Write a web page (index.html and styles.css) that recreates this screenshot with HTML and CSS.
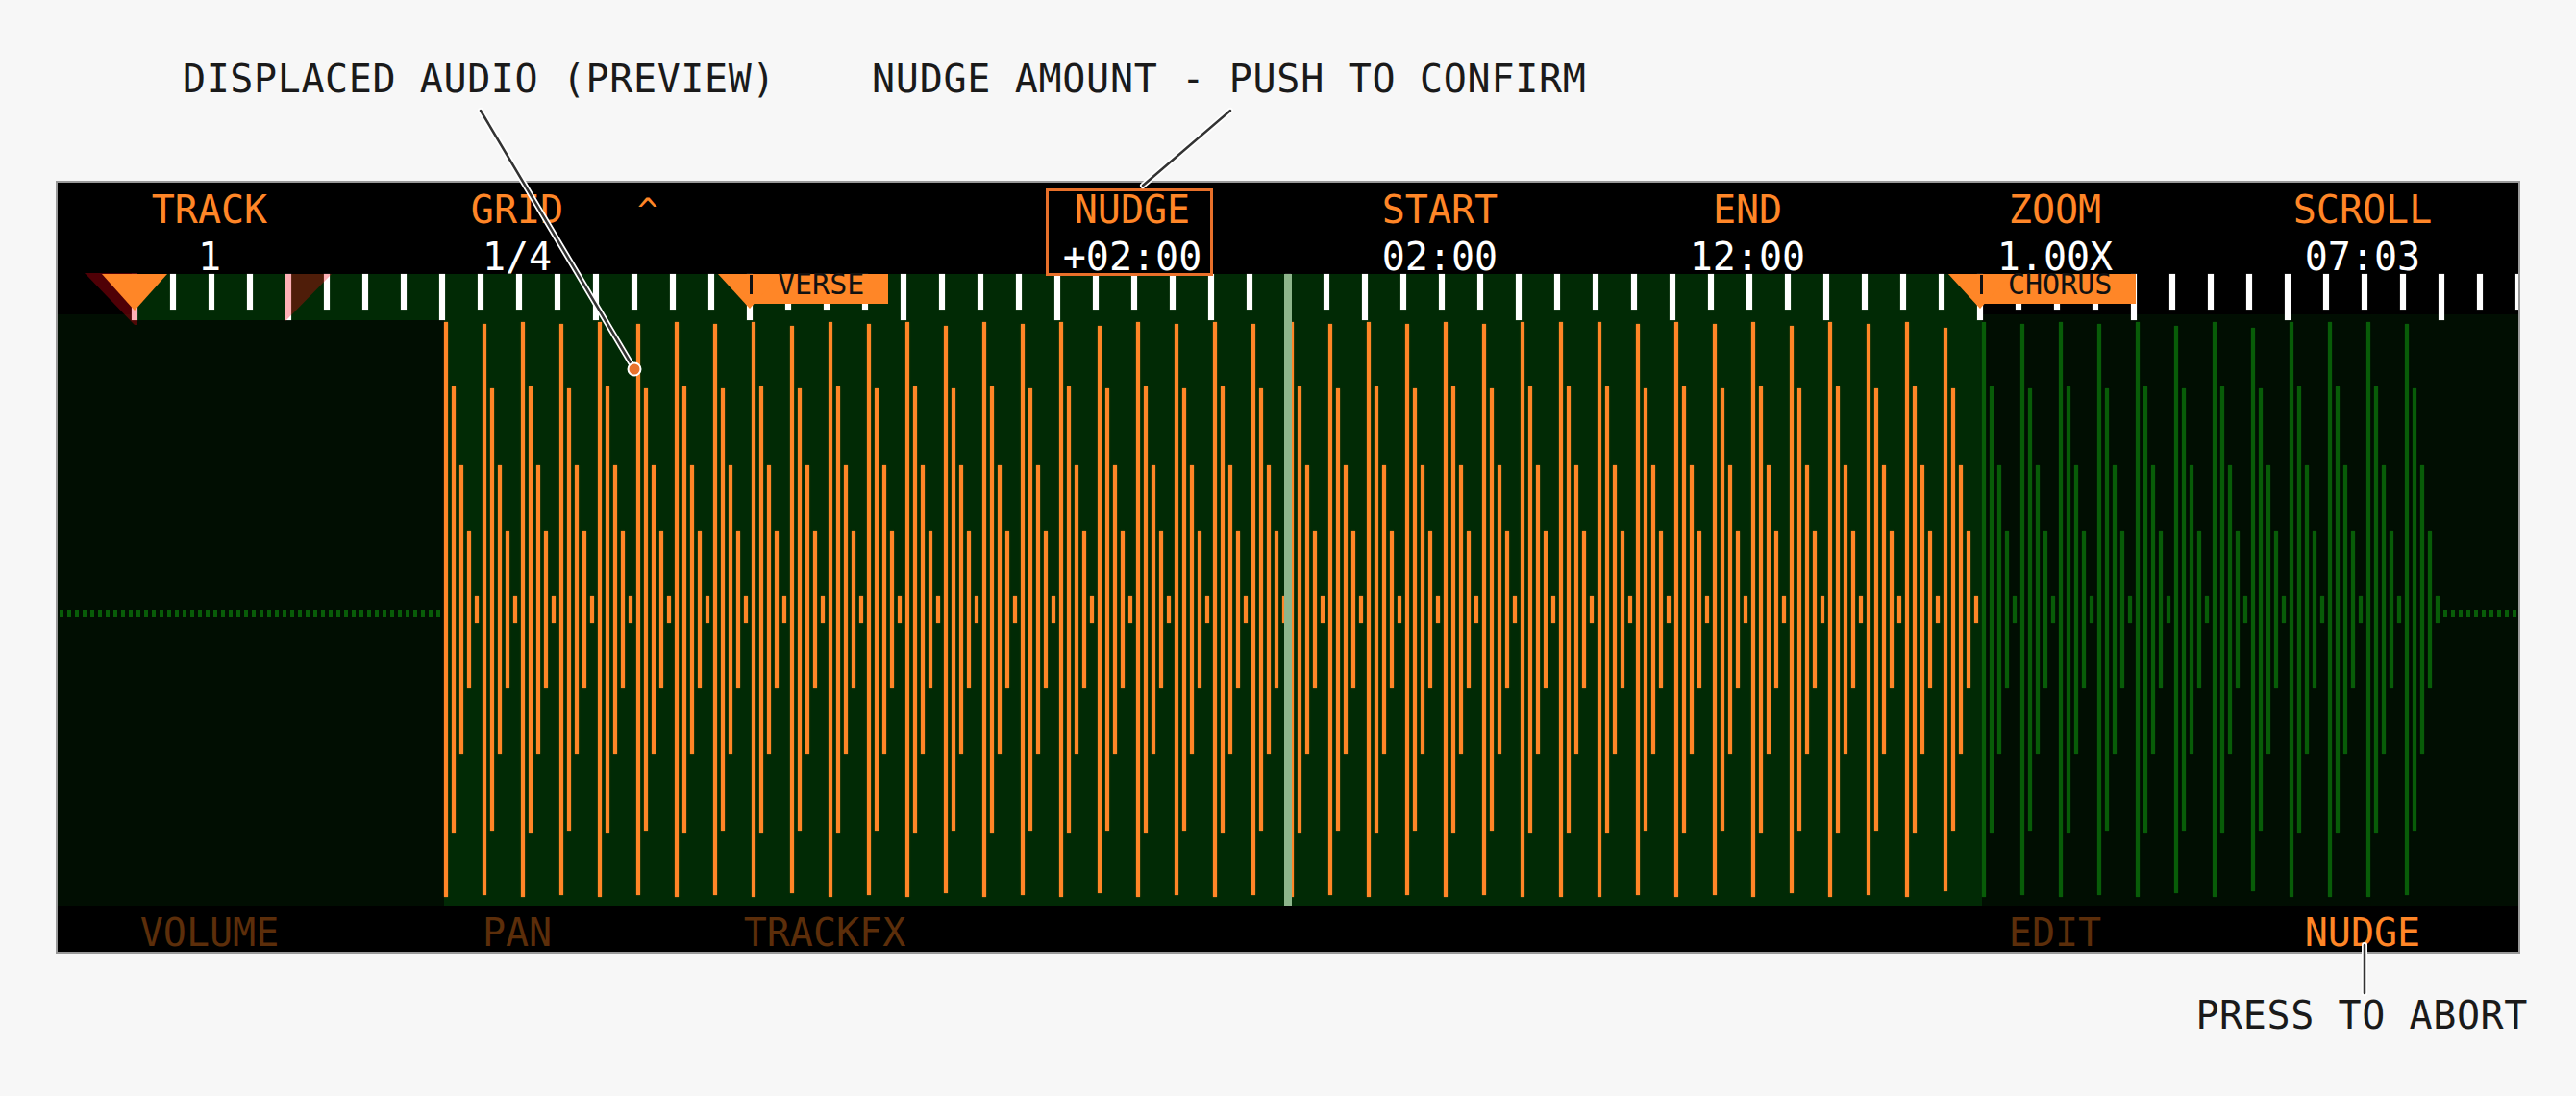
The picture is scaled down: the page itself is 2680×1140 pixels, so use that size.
FILE: index.html
```html
<!DOCTYPE html>
<html>
<head>
  <link rel="stylesheet" href="styles.css">
</head>
<body>
  <div id="page">
    <div class="notes-top">
      <span class="note note-audio">DISPLACED AUDIO (PREVIEW)</span>
      <span class="note note-nudge">NUDGE AMOUNT - PUSH TO CONFIRM</span>
    </div>

    <div id="screen">
      <div class="params">
        <div class="param"><div class="label">TRACK</div><div class="value">1</div></div>
        <div class="param">
          <div class="label">GRID</div><div class="value">1/4</div>
          <span class="caret">^</span>
        </div>
        <div class="param"></div>
        <div class="param active"><div class="label">NUDGE</div><div class="value">+02:00</div></div>
        <div class="param"><div class="label">START</div><div class="value">02:00</div></div>
        <div class="param"><div class="label">END</div><div class="value">12:00</div></div>
        <div class="param"><div class="label">ZOOM</div><div class="value">1.00X</div></div>
        <div class="param"><div class="label">SCROLL</div><div class="value">07:03</div></div>
      </div>

      <div id="ruler"></div>
      <div id="wave"></div>

      <div class="softkeys">
        <div class="softkey">VOLUME</div>
        <div class="softkey">PAN</div>
        <div class="softkey">TRACKFX</div>
        <div class="softkey"></div>
        <div class="softkey"></div>
        <div class="softkey"></div>
        <div class="softkey">EDIT</div>
        <div class="softkey lit">NUDGE</div>
      </div>

      <!-- loop markers, coords are relative to the screen -->
      <svg class="markers" width="2560" height="800">
        <polygon points="28,94 83,94 83,148 80,148" fill="#ff0014" fill-opacity="0.31"/>
        <polygon points="46,95 114,95 80,133" fill="#ff8627"/>
        <polygon points="237,95 285,95 237,144" fill="#ff0014" fill-opacity="0.31"/>
      </svg>

      <div class="playhead"></div>

      <div class="flag flag-verse"><span class="flag-bar"></span><span>VERSE</span></div>
      <div class="flag flag-chorus"><span class="flag-bar"></span><span>CHORUS</span></div>
    </div>

    <div class="notes-bottom">
      <span class="note">PRESS TO ABORT</span>
    </div>

    <!-- callout lines -->
    <svg class="callouts" width="2680" height="1140">
      <g class="halo">
        <line x1="500" y1="115" x2="660" y2="384"/>
        <line x1="1280" y1="115" x2="1189" y2="193"/>
        <line x1="2460" y1="983" x2="2460" y2="1033"/>
      </g>
      <g class="stroke">
        <line x1="500" y1="115" x2="660" y2="384"/>
        <line x1="1280" y1="115" x2="1189" y2="193"/>
        <line x1="2460" y1="983" x2="2460" y2="1033"/>
      </g>
      <circle cx="660" cy="384" r="6.5" fill="#e8722c" stroke="#fff" stroke-width="2"/>
    </svg>
  </div>

  <script src="waveform.js"></script>
</body>
</html>
```

FILE: styles.css
```css
body {
  margin: 0;
  background-color: #f7f7f7;
  font-family: "DejaVu Sans Mono", "Liberation Mono", monospace;
  font-size: 40px;
}

#page {
  position: relative;
  width: 2680px;
  height: 1140px;
  overflow: hidden;
}

.note {
  color: #1a1a1a;
  letter-spacing: 0.6px;
  line-height: 48px;
  white-space: pre;
}

.notes-top {
  display: flex;
  box-sizing: border-box;
  height: 188px;
  padding: 58px 0 0 190px;
}

.note-nudge {
  margin-left: 100px;
  letter-spacing: 0.7px;
}

.notes-bottom {
  display: flex;
  justify-content: flex-end;
  padding: 40px 50px 0 0;
}

#screen {
  position: relative;
  width: 2560px;
  height: 800px;
  margin-left: 58px;
  border: 2px solid #999;
  background-color: #000;
  overflow: hidden;
}

.params, .softkeys {
  display: grid;
  grid-template-columns: repeat(8, 320px);
  text-align: center;
}

.params {
  box-sizing: border-box;
  height: 95px;
  padding-top: 4px;
}

.param {
  position: relative;
  padding-right: 4px;
  line-height: 49px;
}

.label {
  color: #ff8627;
}

.value {
  margin-top: 6px;
  color: #fff;
  line-height: 36px;
}

.caret {
  position: absolute;
  left: 283px;
  top: 0;
  color: #ff8627;
  font-size: 36px;
}

.param.active::after {
  content: "";
  position: absolute;
  left: 68px;
  top: 2px;
  width: 168px;
  height: 85px;
  border: 3px solid #e8702a;
}

/* ruler: green part is the clip, bottom strip belongs to the track lane */
#ruler {
  display: flex;
  align-items: flex-start;
  gap: 34px;
  box-sizing: border-box;
  height: 48px;
  padding-left: 77px;
  background:
    linear-gradient(#012a05, #012a05) 80px 0 / 1922px 100% no-repeat,
    linear-gradient(#010e02, #010e02) 0 100% / 100% 6px no-repeat,
    #000;
}

.tick {
  flex: none;
  width: 6px;
  height: 37px;
  background-color: #fff;
  box-shadow: 0 0 1px rgba(255, 255, 255, 0.5);
}

.tick.bar {
  height: 48px;
}

#wave {
  display: flex;
  align-items: center;
  gap: 4px;
  box-sizing: border-box;
  height: 609px;
  padding: 0 0 7px 2px;
  background:
    linear-gradient(#012a05, #012a05) 402px 0 / 1600px 100% no-repeat,
    #010e02;
}

.sample {
  flex: none;
  width: 4px;
  background-color: #ff8627;
  box-shadow: 0 0 1.5px rgba(255, 134, 39, 0.7);
}

.sample.source {
  background-color: #085c08;
  box-shadow: 0 0 1.5px rgba(8, 92, 8, 0.7);
}

.sample.silent {
  height: 8px;
  margin-top: 8px;
  background-color: #085c08;
  box-shadow: none;
}

.playhead {
  position: absolute;
  left: 1276px;
  top: 95px;
  width: 8px;
  height: 657px;
  background-color: #8db58b;
}

.flag {
  position: absolute;
  top: 95px;
  display: flex;
  align-items: flex-start;
  height: 31px;
  padding-right: 25px;
  background-color: #ff8627;
  color: #111;
  font-size: 30px;
  line-height: 22px;
}

.flag::before {
  content: "";
  position: absolute;
  left: -33px;
  top: 0;
  width: 66px;
  height: 36px;
  background-color: #ff8627;
  clip-path: polygon(0 0, 100% 0, 50% 100%);
}

.flag span {
  position: relative;
}

.flag-bar {
  width: 3px;
  height: 20px;
  margin: 1px 26px 0 0;
  background-color: #111;
}

.flag-verse {
  left: 720px;
}

.flag-chorus {
  left: 2000px;
}

.markers {
  position: absolute;
  left: 0;
  top: 0;
}

.softkeys {
  box-sizing: border-box;
  height: 48px;
  padding-top: 9px;
  line-height: 39px;
}

.softkey {
  padding-right: 4px;
  color: #5c2e0a;
}

.softkey.lit {
  color: #ff8627;
}

.callouts {
  position: absolute;
  left: 0;
  top: 0;
  pointer-events: none;
}

.callouts line {
  stroke-linecap: round;
}

.halo line {
  stroke: #fff;
  stroke-width: 6;
}

.stroke line {
  stroke: #333;
  stroke-width: 2.5;
}
```

FILE: waveform.js
```js
// Top offset of the loudest sample in each 40px period, read off the display
const peaks = [
  0, 2, 0, 2, 0, 2, 0, 2, 0, 4, 0, 2, 0, 4, 0, 2, 0, 4, 0, 2, 0, 2, 0, 2, 0, 2,
  0, 2, 0, 0, 0, 2, 0, 2, 0, 4, 0, 2, 0, 6, 0, 2, 0, 2, 0, 4, 0, 6, 0, 0, 0, 2
];
const CLIP_PERIODS = 40;

function addEl(parent, className, height) {
  const el = document.createElement('div');
  el.className = className;
  if (height) el.style.height = height + 'px';
  parent.appendChild(el);
}

// Ruler ticks, a tall one every four
const ruler = document.getElementById('ruler');
for (let i = 0; i < 63; i++) {
  addEl(ruler, i % 4 === 0 ? 'tick bar' : 'tick');
}

// Samples: silence, then the nudged clip, then the rest of the source, then silence
const wave = document.getElementById('wave');
for (let i = 0; i < 50; i++) addEl(wave, 'sample silent');

peaks.forEach((offset, period) => {
  const cls = period < CLIP_PERIODS ? 'sample' : 'sample source';
  addEl(wave, cls, 598 - offset * 2);
  addEl(wave, cls, 464 - (offset ? 4 : 0));
  addEl(wave, cls, 300);
  addEl(wave, cls, 164);
  addEl(wave, cls, 28);
});

for (let i = 0; i < 10; i++) addEl(wave, 'sample silent');
```
